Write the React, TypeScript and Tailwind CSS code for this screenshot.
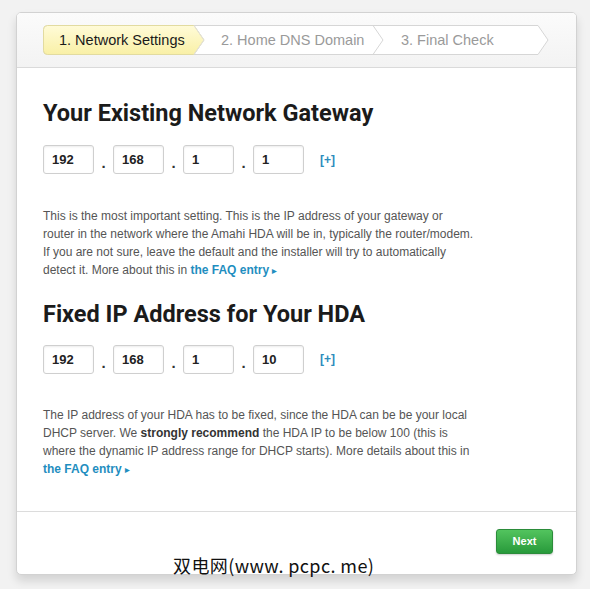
import React from 'react';

const steps = [
  { label: '1. Network Settings', x: 16 },
  { label: '2. Home DNS Domain', x: 178 },
  { label: '3. Final Check', x: 358 },
];

const IpField: React.FC<{ parts: string[] }> = ({ parts }) => (
  <div className="flex items-center">
    {parts.map((p, i) => (
      <React.Fragment key={i}>
        {i > 0 && (
          <span className="w-[19px] text-center text-[15px] font-bold text-[#333] self-end leading-[22px]">.</span>
        )}
        <div className="w-[51px] h-[29px] border border-[#cfcfcf] rounded-[3px] bg-white shadow-[inset_0_1px_2px_rgba(0,0,0,0.08)] flex items-center pl-[8px] text-[13px] font-bold text-[#222]">
          {p}
        </div>
      </React.Fragment>
    ))}
    <span className="ml-[16px] text-[12px] font-bold text-[#2b8cbc]">[+]</span>
  </div>
);

const FaqLink: React.FC = () => (
  <a className="font-bold text-[#1f8ec0]">
    the FAQ entry <span className="text-[6px] align-middle">▶</span>
  </a>
);

const headingFont = { fontFamily: 'Roboto, "Liberation Sans", sans-serif' };

const App: React.FC = () => {
  return (
    <div
      className="relative w-[590px] h-[589px] bg-[#f2f2f2] pt-[12px] pl-[16px] overflow-hidden"
      style={{ fontFamily: '"Liberation Sans", Arial, sans-serif' }}
    >
      <div className="w-[561px] h-[563px] bg-white border border-[#d2d2d2] rounded-[5px] shadow-[0_6px_10px_rgba(0,0,0,0.13)] flex flex-col overflow-hidden">
        {/* step header */}
        <div className="h-[55px] shrink-0 bg-gradient-to-b from-[#fbfbfb] to-[#f3f3f3] border-b border-[#dadada] pl-[26px] pt-[12px]">
          <div className="relative w-[506px] h-[30px]">
            <svg className="absolute inset-0" width="506" height="30" viewBox="0 0 506 30">
              <defs>
                <linearGradient id="yel" x1="0" y1="0" x2="0" y2="1">
                  <stop offset="0" stopColor="#fffbd8" />
                  <stop offset="1" stopColor="#f9f0a6" />
                </linearGradient>
              </defs>
              <path d="M4.5 0.5 H495 L505 15 L495 29.5 H4.5 Q0.5 29.5 0.5 25.5 V4.5 Q0.5 0.5 4.5 0.5 Z" fill="#fff" stroke="#d6d6d6" />
              <path d="M4.5 0.5 H151 L161 15 L151 29.5 H4.5 Q0.5 29.5 0.5 25.5 V4.5 Q0.5 0.5 4.5 0.5 Z" fill="url(#yel)" stroke="#e2dba0" />
              <path d="M151 0.5 L161 15 L151 29.5" fill="none" stroke="#e0e0e0" />
              <path d="M330 0.5 L340 15 L330 29.5" fill="none" stroke="#d6d6d6" />
            </svg>
            {steps.map((s, i) => (
              <span
                key={s.label}
                className={`absolute top-0 leading-[30px] text-[14.5px] ${i === 0 ? 'text-[#1a1a1a]' : 'text-[#9a9a9a]'}`}
                style={{ left: s.x }}
              >
                {s.label}
              </span>
            ))}
          </div>
        </div>

        {/* body */}
        <div className="flex-1 pl-[26px] pr-[24px]">
          <h2 className="mt-[31px] text-[23.5px] leading-[28px] font-bold text-[#1b1b1b]" style={headingFont}>
            Your Existing Network Gateway
          </h2>
          <div className="mt-[18px]">
            <IpField parts={['192', '168', '1', '1']} />
          </div>
          <p className="mt-[33px] text-[12px] leading-[18px] text-[#555] whitespace-nowrap">
            This is the most important setting. This is the IP address of your gateway or
            <br />
            router in the network where the Amahi HDA will be in, typically the router/modem.
            <br />
            If you are not sure, leave the default and the installer will try to automatically
            <br />
            detect it. More about this in <FaqLink />
          </p>

          <h2 className="mt-[20px] text-[23.5px] leading-[28px] font-bold text-[#1b1b1b]" style={headingFont}>
            Fixed IP Address for Your HDA
          </h2>
          <div className="mt-[17px]">
            <IpField parts={['192', '168', '1', '10']} />
          </div>
          <p className="mt-[32px] text-[12px] leading-[18px] text-[#555] whitespace-nowrap">
            The IP address of your HDA has to be fixed, since the HDA can be be your local
            <br />
            DHCP server. We <b className="text-[#333]">strongly recommend</b> the HDA IP to be below 100 (this is
            <br />
            where the dynamic IP address range for DHCP starts). More details about this in
            <br />
            <FaqLink />
          </p>
        </div>

        {/* footer */}
        <div className="h-[63px] shrink-0 border-t border-[#dcdcdc] flex justify-end pt-[17px] pr-[23px]">
          <button className="w-[57px] h-[25px] rounded-[3px] border border-[#2b8c3a] bg-gradient-to-b from-[#52c45e] to-[#279a3b] text-white text-[11px] font-bold shadow-[0_1px_2px_rgba(0,0,0,0.2)]">
            Next
          </button>
        </div>
      </div>

      <div
        className="absolute left-[173px] top-[553px] text-[18px] leading-[24px] tracking-[0.4px] text-[#111]"
        style={{ fontFamily: '"Noto Sans CJK SC", "Liberation Sans", sans-serif' }}
      >
        双电网(www. pcpc. me)
      </div>
    </div>
  );
};

export default App;
